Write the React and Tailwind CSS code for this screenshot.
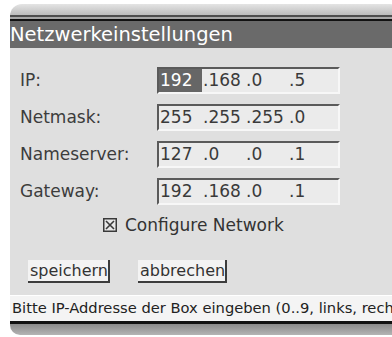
import React from "react";

const rows = [
  { label: "IP:", parts: ["192", ".168", ".0", ".5"], active: 0 },
  { label: "Netmask:", parts: ["255", ".255", ".255", ".0"] },
  { label: "Nameserver:", parts: ["127", ".0", ".0", ".1"] },
  { label: "Gateway:", parts: ["192", ".168", ".0", ".1"] },
];

const IpField = ({ parts, active }) => (
  <div className="flex h-[27px] w-[183px] border-t-2 border-l-2 border-t-[#5a5a5a] border-l-[#5a5a5a] border-b-2 border-r-2 border-b-[#f7f7f7] border-r-[#f7f7f7] bg-[#ebebeb]">
    {parts.map((p, i) => (
      <div
        key={i}
        className={`flex h-full w-[43px] items-center pl-[1px] text-[17px] leading-none ${
          i === active ? "bg-[#666666] text-white" : "text-[#3a3a3a]"
        }`}
      >
        {p}
      </div>
    ))}
  </div>
);

const Button = ({ children }) => (
  <div className="flex h-[23px] items-center border-r-2 border-b-2 border-r-[#3c3c3c] border-b-[#3c3c3c] bg-[#f3f3f3] pl-[2px] text-[16px] leading-none text-[#333]">
    {children}
  </div>
);

export default function App() {
  return (
    <div
      className="h-[337px] w-[392px] overflow-hidden bg-white pl-[10px] pt-[4px]"
      style={{ fontFamily: '"DejaVu Sans", sans-serif' }}
    >
      <div className="flex w-[392px] flex-col overflow-hidden rounded-t-[12px] rounded-b-[10px]">
        {/* top cap */}
        <div className="h-[11px] bg-gradient-to-b from-[#e4e4e4] to-[#bdbdbd]" />
        <div className="h-[2px] bg-[#4e4e4e]" />
        <div className="h-[2px] bg-[#a8a8a8]" />
        <div className="h-[2px] bg-[#111]" />

        {/* title */}
        <div className="flex h-[27px] items-center bg-[#6a6a6a] text-[19.5px] leading-none text-white">
          Netzwerkeinstellungen
        </div>

        {/* content */}
        <div className="flex h-[247px] flex-col bg-[#dfdfdf] pt-[19px]">
          <div className="flex flex-col gap-[10px]">
            {rows.map((r) => (
              <div key={r.label} className="flex items-center">
                <div className="w-[147px] pl-[10px] text-[17px] leading-none text-[#3c3c3c]">
                  {r.label}
                </div>
                <IpField parts={r.parts} active={r.active} />
              </div>
            ))}
          </div>

          <div className="mt-[9px] flex h-[22px] items-center pl-[93px] text-[17px] leading-none text-[#333]">
            <svg width="14" height="14" viewBox="0 0 14 14" className="mr-[8px]">
              <rect x="0.75" y="0.75" width="12.5" height="12.5" fill="#e8e8e8" stroke="#3a3a3a" strokeWidth="1.5" />
              <path d="M3 3 L11 11 M11 3 L3 11" stroke="#3a3a3a" strokeWidth="1.6" />
            </svg>
            Configure Network
          </div>

          <div className="mt-[24px] flex gap-[28px] pl-[18px]">
            <Button>speichern</Button>
            <Button>abbrechen</Button>
          </div>
        </div>

        {/* status */}
        <div className="flex h-[26px] items-center whitespace-nowrap border-t border-t-white bg-[#f4f4f4] pl-[2px] text-[14.7px] leading-none text-[#222]">
          Bitte IP-Addresse der Box eingeben (0..9, links, rechts)
        </div>
        <div className="h-[3px] bg-[#111]" />
        <div className="h-[11px] bg-gradient-to-b from-[#8a8a8a] to-[#b4b4b4]" />
      </div>
    </div>
  );
}
